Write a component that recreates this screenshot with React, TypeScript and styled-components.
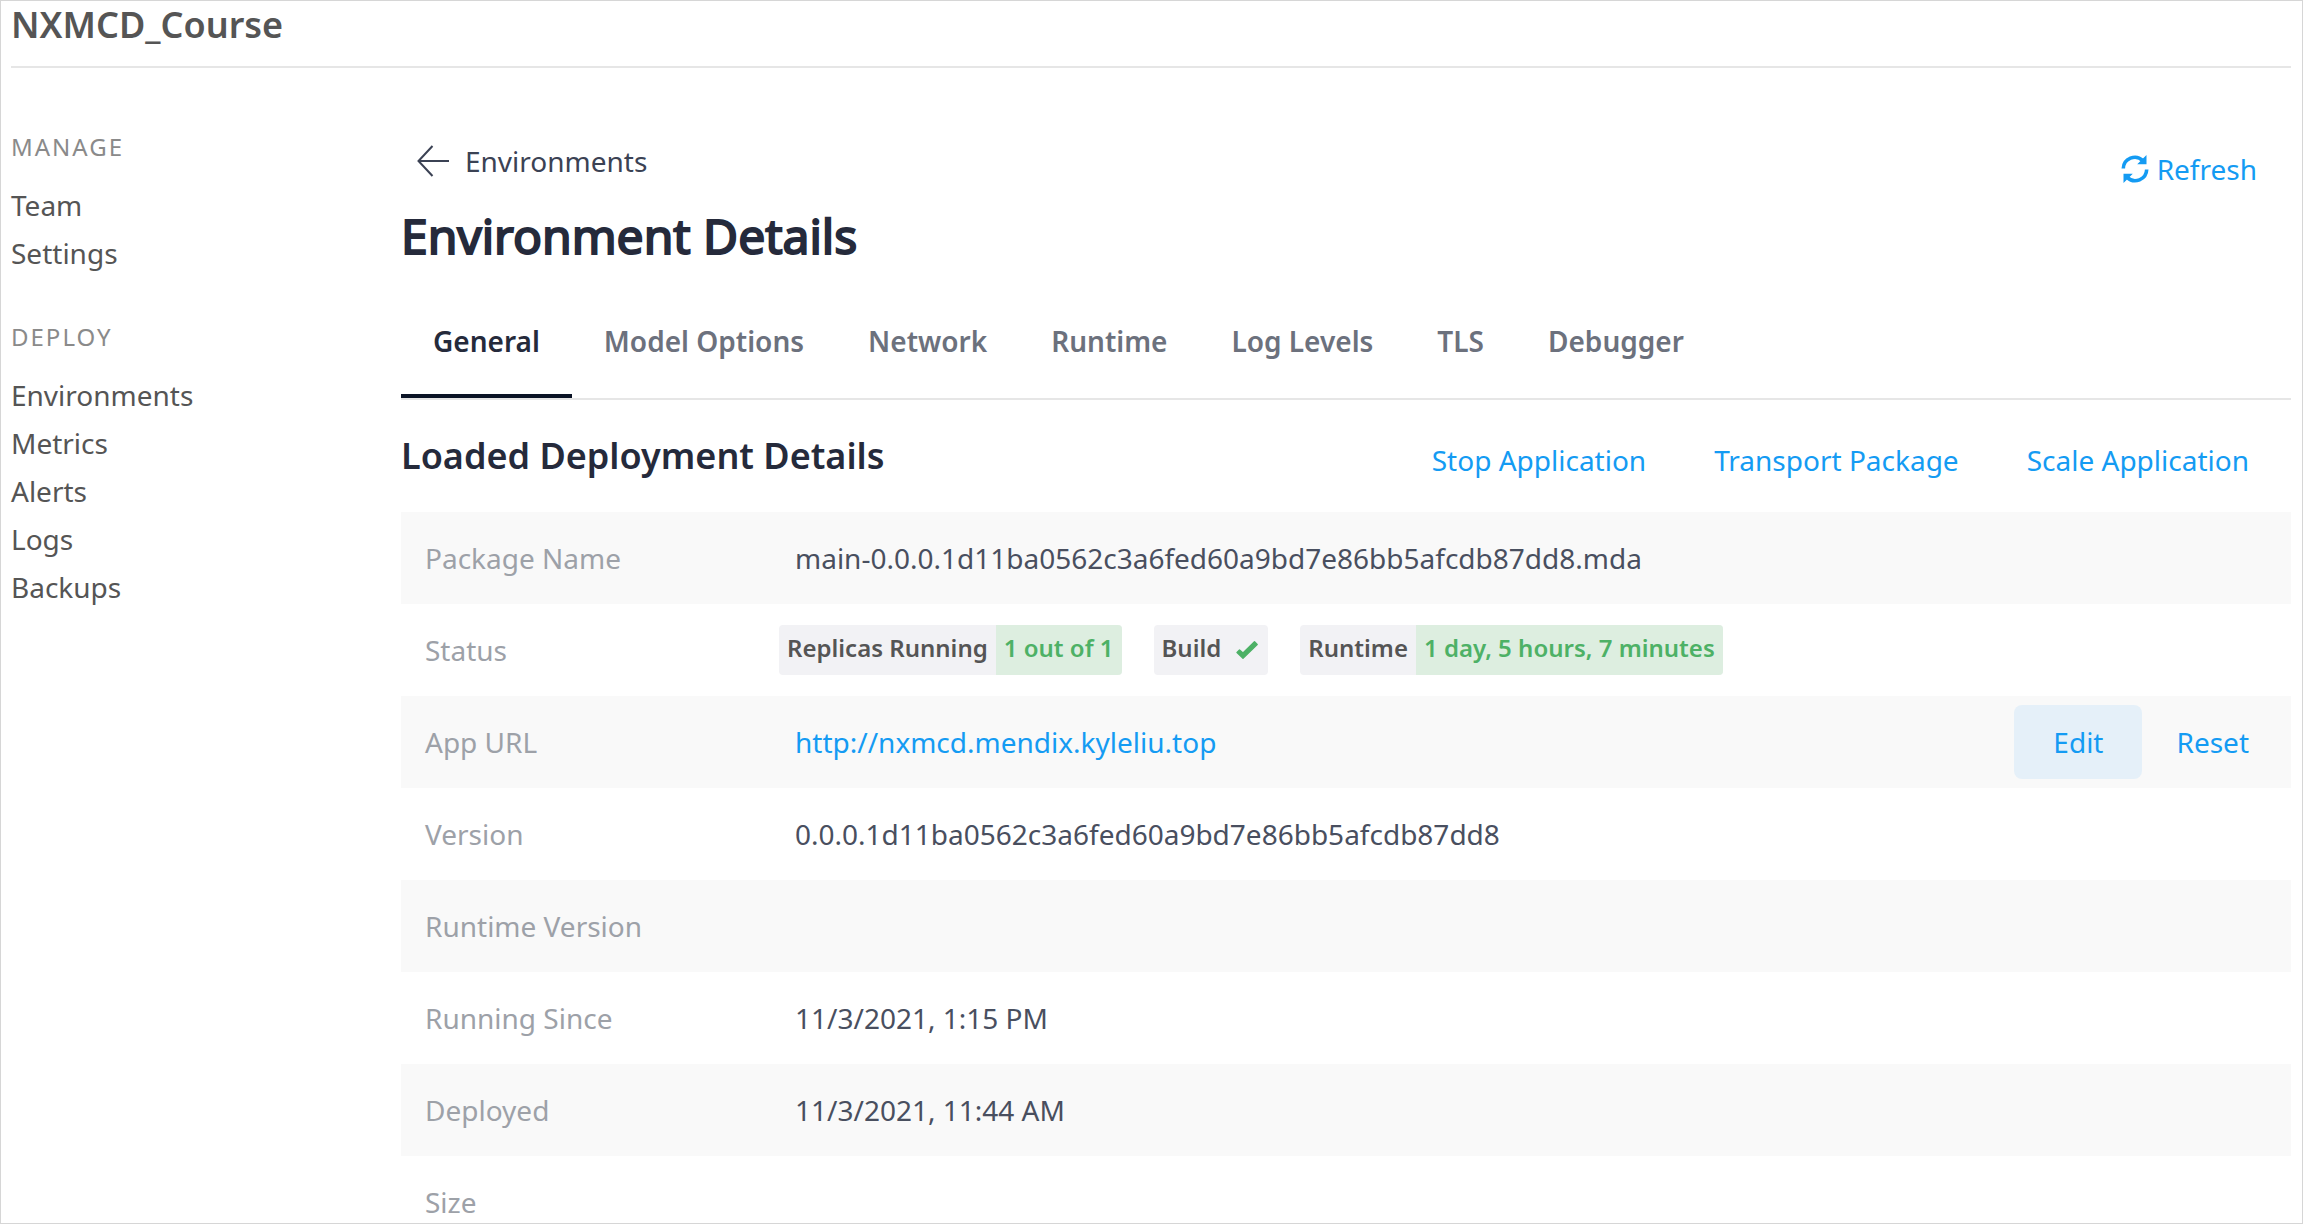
import React from "react";
import styled, { createGlobalStyle, css } from "styled-components";

const color = {
  text: "#3b4254",
  value: "#494f5f",
  muted: "#9da1a8",
  heading: "#252a3b",
  side: "#555555",
  link: "#149bf3",
  line: "#e6e6e6",
  green: "#4db166",
};

const GlobalStyle = createGlobalStyle`
  * { box-sizing: border-box; }
  body { margin: 0; background: #fff; }
  body, button { font-family: "Noto Sans", "Open Sans", sans-serif; font-size: 28px; line-height: 40px; }
  h1, h2, h3, ul { margin: 0; padding: 0; }
  a { text-decoration: none; }
`;

const Frame = styled.div`
  height: 100vh;
  overflow: hidden;
  border: 1px solid #d6d6d6;
  padding: 0 11px 0 10px;
`;

const Header = styled.header`
  padding-bottom: 17px;
  border-bottom: 2px solid ${color.line};
`;

const AppName = styled.div`
  font-size: 36px;
  line-height: 48px;
  font-weight: 600;
  color: ${color.side};
`;

const Body = styled.div`
  display: grid;
  grid-template-columns: 390px minmax(0, 1fr);
`;

const Sidebar = styled.nav`
  display: flex;
  flex-direction: column;
  gap: 42px;
  padding-top: 61px;
`;

const SideHeading = styled.h3`
  margin-bottom: 16px;
  font-size: 24px;
  line-height: 36px;
  font-weight: 400;
  letter-spacing: 2px;
  text-transform: uppercase;
  color: #8a8a8a;
`;

const SideList = styled.ul`
  list-style: none;
`;

const SideLink = styled.a`
  display: block;
  line-height: 48px;
  color: ${color.side};
`;

const Main = styled.main`
  padding-top: 73px;
`;

const TopBar = styled.div`
  display: flex;
  justify-content: space-between;
  align-items: flex-start;
`;

const BackLink = styled.a`
  display: flex;
  align-items: center;
  gap: 16px;
  padding-left: 16px;
  color: ${color.text};
`;

const textButton = css`
  border: 0;
  padding: 0;
  background: none;
  color: ${color.link};
  cursor: pointer;
`;

const RefreshButton = styled.button`
  ${textButton}
  display: flex;
  align-items: center;
  gap: 8px;
  margin: 8px 34px 0 0;
`;

const PageTitle = styled.h1`
  margin-top: 15px;
  font-size: 48px;
  line-height: 64px;
  font-weight: 400;
  color: ${color.heading};
  -webkit-text-stroke: 2px ${color.heading};
`;

const Tabs = styled.div`
  display: flex;
  margin-top: 18px;
  border-bottom: 2px solid ${color.line};
`;

const Tab = styled.button<{ $active?: boolean }>`
  border: 0;
  border-bottom: 4px solid ${(p) => (p.$active ? "#0a1325" : "transparent")};
  padding: 35px 32px 33px;
  background: none;
  font-weight: 600;
  color: ${(p) => (p.$active ? color.heading : "#6c717d")};
  cursor: pointer;
`;

const SectionBar = styled.div`
  display: flex;
  align-items: flex-end;
  justify-content: space-between;
  padding: 32px 42px 32px 0;
`;

const SectionTitle = styled.h2`
  font-size: 36px;
  line-height: 48px;
  font-weight: 600;
  color: ${color.heading};
`;

const Actions = styled.div<{ $gap: number }>`
  display: flex;
  align-items: center;
  justify-content: flex-end;
  gap: ${(p) => p.$gap}px;
`;

const TextButton = styled.button`
  ${textButton}
`;

const EditButton = styled.button`
  ${textButton}
  padding: 17px 39px;
  border-radius: 8px;
  background: #e5f0f9;
`;

const Details = styled.table`
  width: 100%;
  border-collapse: collapse;
`;

const Row = styled.tr`
  height: 92px;
  &:nth-child(odd) {
    background: #f9f9f9;
  }
`;

const Label = styled.th`
  width: 378px;
  padding: 0 0 0 24px;
  text-align: left;
  font-weight: 400;
  color: ${color.muted};
`;

const Value = styled.td<{ $flush?: boolean }>`
  padding: 0 42px 0 ${(p) => (p.$flush ? 0 : 16)}px;
  color: ${color.value};
`;

const ValueLine = styled.div`
  display: flex;
  align-items: center;
  justify-content: space-between;
`;

const UrlLink = styled.a`
  color: ${color.link};
`;

const Badges = styled.div`
  display: flex;
  gap: 32px;
`;

const Badge = styled.div`
  display: flex;
  overflow: hidden;
  border-radius: 4px;
  background: #f2f2f5;
  font-size: 24px;
  line-height: 46px;
  font-weight: 600;
  color: #555;
`;

const BadgePart = styled.span<{ $good?: boolean }>`
  display: flex;
  align-items: center;
  gap: 12px;
  padding: 0 8px 4px;
  ${(p) => p.$good && css`
    background: #ddeee0;
    color: ${color.green};
  `}
`;

const ArrowIcon = () => (
  <svg width="32" height="32" viewBox="0 0 32 32" fill="none" stroke={color.text} strokeWidth="2" aria-hidden="true">
    <path d="M15.5 1 1.5 16 15.5 31M1.5 16H32" />
  </svg>
);

const RefreshIcon = () => (
  <svg width="28" height="28" viewBox="0 0 28 28" aria-hidden="true">
    <path d="M2.3 13.5A11.5 11.5 0 0 1 21.8 5.6M25.7 14.5A11.5 11.5 0 0 1 6.2 22.4" fill="none" stroke={color.link} strokeWidth="3.6" />
    <path d="M25.5 0v9.3h-9.3zM2.5 28v-9.3h9.3z" fill={color.link} />
  </svg>
);

const CheckIcon = () => (
  <svg width="27" height="26" viewBox="0 0 27 26" aria-hidden="true">
    <path d="M4 17.5 6.5 15 10 18 21.5 6.8 24.2 9.5 10 23.2z" fill={color.green} stroke={color.green} strokeWidth="1.4" strokeLinejoin="round" />
  </svg>
);

const sideGroups = [
  { title: "Manage", items: ["Team", "Settings"] },
  { title: "Deploy", items: ["Environments", "Metrics", "Alerts", "Logs", "Backups"] },
];

const tabs = ["General", "Model Options", "Network", "Runtime", "Log Levels", "TLS", "Debugger"];

const rows: { label: string; flush?: boolean; value?: React.ReactNode }[] = [
  { label: "Package Name", value: "main-0.0.0.1d11ba0562c3a6fed60a9bd7e86bb5afcdb87dd8.mda" },
  {
    label: "Status",
    flush: true,
    value: (
      <Badges>
        <Badge>
          <BadgePart>Replicas Running</BadgePart>
          <BadgePart $good>1 out of 1</BadgePart>
        </Badge>
        <Badge>
          <BadgePart>
            Build <CheckIcon />
          </BadgePart>
        </Badge>
        <Badge>
          <BadgePart>Runtime</BadgePart>
          <BadgePart $good>1 day, 5 hours, 7 minutes</BadgePart>
        </Badge>
      </Badges>
    ),
  },
  {
    label: "App URL",
    value: (
      <ValueLine>
        <UrlLink href="#app">http://nxmcd.mendix.kyleliu.top</UrlLink>
        <Actions $gap={34}>
          <EditButton type="button">Edit</EditButton>
          <TextButton type="button">Reset</TextButton>
        </Actions>
      </ValueLine>
    ),
  },
  { label: "Version", value: "0.0.0.1d11ba0562c3a6fed60a9bd7e86bb5afcdb87dd8" },
  { label: "Runtime Version" },
  { label: "Running Since", value: "11/3/2021, 1:15 PM" },
  { label: "Deployed", value: "11/3/2021, 11:44 AM" },
  { label: "Size" },
];

export default function App() {
  return (
    <Frame>
      <GlobalStyle />
      <Header>
        <AppName>NXMCD_Course</AppName>
      </Header>
      <Body>
        <Sidebar>
          {sideGroups.map((group) => (
            <section key={group.title}>
              <SideHeading>{group.title}</SideHeading>
              <SideList>
                {group.items.map((item) => (
                  <li key={item}>
                    <SideLink href="#nav">{item}</SideLink>
                  </li>
                ))}
              </SideList>
            </section>
          ))}
        </Sidebar>
        <Main>
          <TopBar>
            <BackLink href="#environments">
              <ArrowIcon />
              Environments
            </BackLink>
            <RefreshButton type="button">
              <RefreshIcon />
              Refresh
            </RefreshButton>
          </TopBar>
          <PageTitle>Environment Details</PageTitle>
          <Tabs role="tablist">
            {tabs.map((tab, i) => (
              <Tab key={tab} type="button" role="tab" aria-selected={i === 0} $active={i === 0}>
                {tab}
              </Tab>
            ))}
          </Tabs>
          <SectionBar>
            <SectionTitle>Loaded Deployment Details</SectionTitle>
            <Actions $gap={68}>
              <TextButton type="button">Stop Application</TextButton>
              <TextButton type="button">Transport Package</TextButton>
              <TextButton type="button">Scale Application</TextButton>
            </Actions>
          </SectionBar>
          <Details>
            <tbody>
              {rows.map((row) => (
                <Row key={row.label}>
                  <Label scope="row">{row.label}</Label>
                  <Value $flush={row.flush}>{row.value}</Value>
                </Row>
              ))}
            </tbody>
          </Details>
        </Main>
      </Body>
    </Frame>
  );
}
